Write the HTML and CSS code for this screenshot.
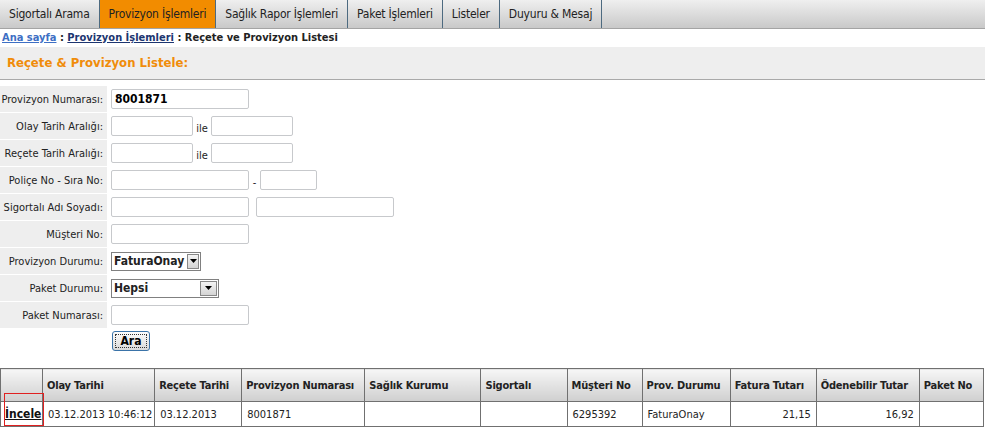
FILE: index.html
```html
<!doctype html>
<html>
  <head>
    <meta charset="utf-8">
    <title>Reçete ve Provizyon Listesi</title>
    <link rel="stylesheet" href="styles.css">
  </head>
  <body>
    <div id="menu">
      <a class="tab" href="#">Sigortalı Arama</a>
      <a class="tab active" href="#">Provizyon İşlemleri</a>
      <a class="tab" href="#">Sağlık Rapor İşlemleri</a>
      <a class="tab" href="#">Paket İşlemleri</a>
      <a class="tab" href="#">Listeler</a>
      <a class="tab" href="#">Duyuru &amp; Mesaj</a>
    </div>

    <div id="crumbs">
      <a class="home" href="#">Ana sayfa</a> : <a class="section" href="#">Provizyon İşlemleri</a> : Reçete ve Provizyon Listesi
    </div>

    <div class="page-title">Reçete &amp; Provizyon Listele:</div>

    <table class="search">
      <tr>
        <th>Provizyon Numarası:</th>
        <td><input class="txt w137 bold" type="text" value="8001871"></td>
      </tr>
      <tr>
        <th>Olay Tarih Aralığı:</th>
        <td><input class="txt w81" type="text"><span class="sep">ile</span><input class="txt w81" type="text"></td>
      </tr>
      <tr>
        <th>Reçete Tarih Aralığı:</th>
        <td><input class="txt w81" type="text"><span class="sep">ile</span><input class="txt w81" type="text"></td>
      </tr>
      <tr>
        <th>Poliçe No - Sıra No:</th>
        <td><input class="txt w137" type="text"><span class="sep dash">-</span><input class="txt w56" type="text"></td>
      </tr>
      <tr>
        <th>Sigortalı Adı Soyadı:</th>
        <td><input class="txt w137" type="text"><span class="sep gap"></span><input class="txt w137" type="text"></td>
      </tr>
      <tr>
        <th>Müşteri No:</th>
        <td><input class="txt w137" type="text"></td>
      </tr>
      <tr>
        <th>Provizyon Durumu:</th>
        <td>
          <div class="combo w90"><span class="val">FaturaOnay</span><span class="drop"><svg width="7" height="4" viewBox="0 0 7 4"><path d="M0 0h7L3.5 4z" fill="#000"/></svg></span></div>
        </td>
      </tr>
      <tr>
        <th>Paket Durumu:</th>
        <td>
          <div class="combo w108"><span class="val">Hepsi</span><span class="drop"><svg width="7" height="4" viewBox="0 0 7 4"><path d="M0 0h7L3.5 4z" fill="#000"/></svg></span></div>
        </td>
      </tr>
      <tr>
        <th>Paket Numarası:</th>
        <td><input class="txt w137" type="text"></td>
      </tr>
      <tr class="actions">
        <td></td>
        <td><button class="btn" type="button">Ara</button></td>
      </tr>
    </table>

    <table class="grid">
      <colgroup>
        <col style="width: 42px">
        <col style="width: 112px">
        <col style="width: 87px">
        <col style="width: 123px">
        <col style="width: 116px">
        <col style="width: 86px">
        <col style="width: 75px">
        <col style="width: 88px">
        <col style="width: 86px">
        <col style="width: 103px">
        <col style="width: 64px">
      </colgroup>
      <thead>
        <tr>
          <th></th>
          <th>Olay Tarihi</th>
          <th>Reçete Tarihi</th>
          <th>Provizyon Numarası</th>
          <th>Sağlık Kurumu</th>
          <th>Sigortalı</th>
          <th>Müşteri No</th>
          <th>Prov. Durumu</th>
          <th>Fatura Tutarı</th>
          <th>Ödenebilir Tutar</th>
          <th>Paket No</th>
        </tr>
      </thead>
      <tbody>
        <tr>
          <td class="link"><a class="marked" href="#">İncele</a></td>
          <td>03.12.2013 10:46:12</td>
          <td>03.12.2013</td>
          <td>8001871</td>
          <td></td>
          <td></td>
          <td>6295392</td>
          <td>FaturaOnay</td>
          <td class="num">21,15</td>
          <td class="num">16,92</td>
          <td></td>
        </tr>
      </tbody>
    </table>
  </body>
</html>
```

FILE: styles.css
```css
body {
  margin: 0;
  color: #222;
  font-family: "DejaVu Sans Condensed", "DejaVu Sans", Tahoma, sans-serif;
  font-size: 11px;
  background: #fff;
}

/* top menu */
#menu {
  display: flex;
  height: 28px;
  border-bottom: 1px solid #a4a4a4;
  background: linear-gradient(#efefef, #c9c9c9);
}

#menu .tab {
  display: flex;
  align-items: center;
  padding: 0 9px;
  border-right: 1px solid #4d6a80;
  color: #222;
  font-size: 12px;
  letter-spacing: -0.2px;
  text-decoration: none;
}

#menu .tab.active {
  background: #f28c00;
}

/* breadcrumb */
#crumbs {
  height: 16px;
  padding: 2px 0 0 2px;
  font-weight: bold;
  color: #222;
}

#crumbs a.home {
  color: #3d6fc4;
}

#crumbs a.section {
  color: #1c3570;
}

.page-title {
  height: 32px;
  line-height: 32px;
  padding-left: 7px;
  background: #eeeeee;
  border-bottom: 1px solid #a9a9a9;
  color: #f08c0a;
  font-size: 13px;
  font-weight: bold;
}

/* search form */
table.search {
  margin-top: 5px;
  border-collapse: separate;
  border-spacing: 0 1px;
}

table.search th {
  width: 103px;
  height: 26px;
  padding: 0 4px 0 0;
  background: #eeeeee;
  text-align: right;
  font-weight: normal;
  white-space: nowrap;
}

table.search td {
  padding: 0 0 0 4px;
  white-space: nowrap;
}

table.search tr.actions td {
  height: 24px;
  padding-top: 2px;
  vertical-align: top;
}

.txt {
  box-sizing: border-box;
  height: 20px;
  margin: 0;
  padding: 1px 3px;
  border: 1px solid #c7c9cc;
  border-radius: 2px;
  font: inherit;
  vertical-align: middle;
}

.txt.bold {
  font-weight: bold;
  font-size: 12px;
}

.w137 { width: 138px; }
.w81 { width: 82px; }
.w56 { width: 57px; }
.w90 { width: 90px; }
.w108 { width: 108px; }

.sep {
  display: inline-block;
  width: 18px;
  padding-top: 5px;
  text-align: center;
  vertical-align: middle;
}

.sep.dash {
  width: 11px;
}

.sep.gap {
  width: 7px;
}

.combo {
  box-sizing: border-box;
  display: flex;
  height: 19px;
  border: 1px solid #808080;
  background: #fff;
}

.combo .val {
  flex: 1;
  padding: 1px 2px;
  font-weight: bold;
  font-size: 12px;
  line-height: 15px;
}

.combo .drop {
  display: flex;
  align-items: center;
  justify-content: center;
  width: 15px;
  margin: 1px;
  border: 1px solid #888;
  background: linear-gradient(#f4f4f4, #d4d4d4);
}

.btn {
  display: block;
  box-sizing: border-box;
  width: 38px;
  height: 20px;
  margin-left: 1px;
  padding: 0;
  border: 1px solid #3a73a8;
  border-radius: 3px;
  background: linear-gradient(#fdfdfd, #d9d9d9);
  outline: 1px dotted #333;
  outline-offset: -4px;
  color: #000;
  font: inherit;
  font-weight: bold;
  font-size: 12px;
}

/* results grid */
table.grid {
  margin-top: 12px;
  width: 984px;
  table-layout: fixed;
  border-collapse: collapse;
  border: 1px solid #707070;
}

table.grid th,
table.grid td {
  border: 1px solid #707070;
  padding: 0 5px;
  text-align: left;
  white-space: nowrap;
  overflow: hidden;
}

table.grid th {
  height: 32px;
  padding: 0 4px;
  background: linear-gradient(#f6f6f6, #cfcfcf);
  font-size: 11px;
  font-weight: bold;
  letter-spacing: -0.2px;
  color: #222;
}

table.grid td {
  height: 24px;
  color: #222;
}

table.grid td.num {
  text-align: right;
}

table.grid td.link {
  padding: 0 0 0 4px;
  overflow: visible;
}

.marked {
  position: relative;
  display: inline-block;
  color: #111;
  font-weight: bold;
  font-size: 12px;
  line-height: 14px;
}

/* red highlight frame drawn over the row link */
.marked::after {
  content: "";
  position: absolute;
  z-index: 1;
  left: -1px;
  right: -3px;
  top: -14px;
  bottom: -5px;
  border: 1px solid #e02020;
}
```
